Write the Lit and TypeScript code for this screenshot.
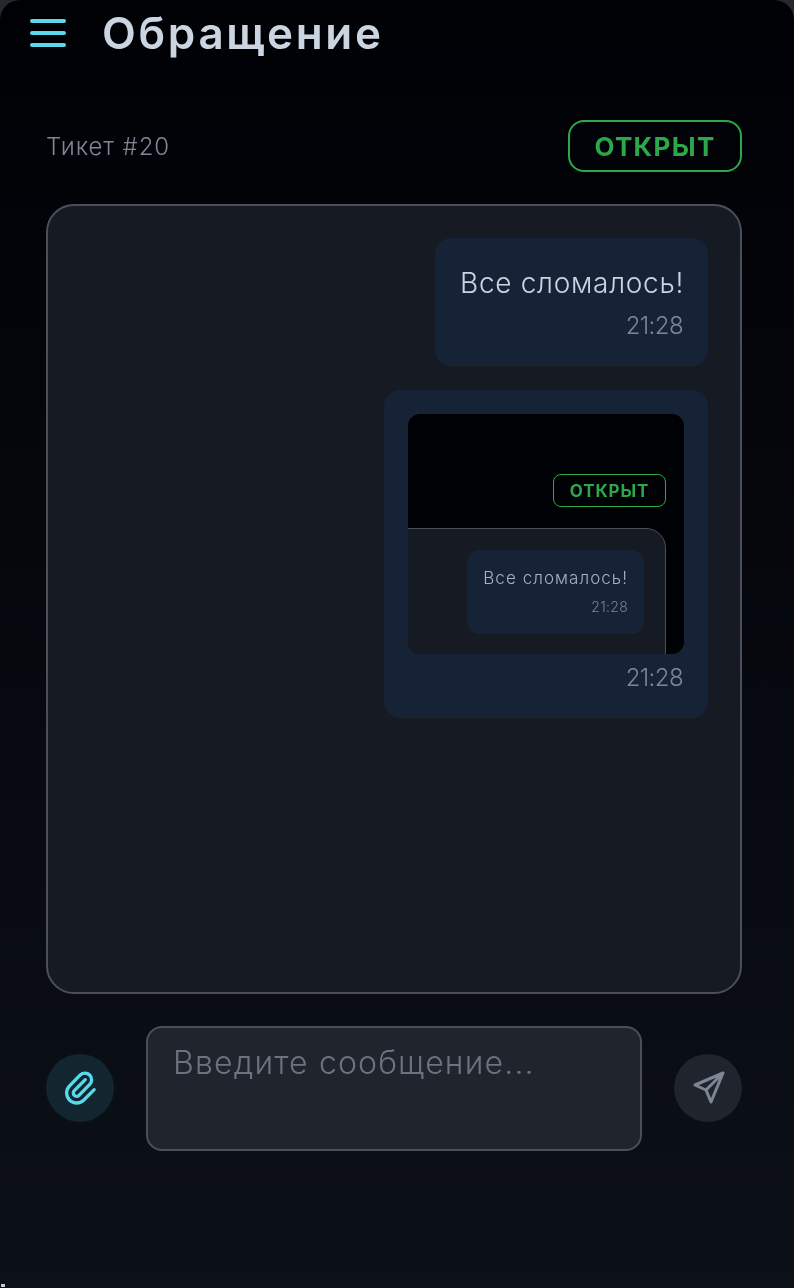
import { LitElement, html, css } from "lit";
import { customElement } from "lit/decorators.js";

@customElement("app-root")
export class AppRoot extends LitElement {
  static styles = css`
    :host { display: block; position: relative; width: 794px; height: 1288px; background: #26282d; font-family: "Inter", "Noto Sans", sans-serif; }
    * { box-sizing: border-box; }
    .page { width: 794px; height: 1288px; border-radius: 20px 20px 0 0; overflow: hidden; padding: 0 52px 0 46px; background: linear-gradient(180deg, #000105 0%, #0c1018 100%); display: flex; flex-direction: column; will-change: transform; }
    .head { display: flex; align-items: center; gap: 36px; height: 66px; margin-left: -16px; }
    .burger { width: 36px; height: 28px; display: flex; flex-direction: column; justify-content: space-between; }
    .burger i { display: block; height: 4px; border-radius: 2px; background: #5ad8ec; }
    h1 { margin: 0; font-size: 44px; font-weight: 600; color: #cbd5e1; letter-spacing: 2.7px; }
    .meta { display: flex; justify-content: space-between; align-items: center; margin-top: 54px; width: 696px; }
    .ticket { font-size: 24px; color: #7f8794; font-weight: 300; letter-spacing: 0.9px; }
    .badge { width: 174px; height: 52px; border: 2px solid #2ba84a; border-radius: 16px; color: #2ba84a; font-weight: 700; font-size: 26px; letter-spacing: 1.3px; display: flex; align-items: center; justify-content: center; }
    .panel { width: 696px; height: 790px; margin-top: 32px; background: #161a22; border: 2px solid #4a4f5a; border-radius: 28px; padding: 32px; display: flex; flex-direction: column; align-items: flex-end; gap: 24px; }
    .bubble { background: #162336; border-radius: 16px; padding: 24px; display: flex; flex-direction: column; align-items: flex-end; }
    .text { font-size: 28px; color: #cbd5e1; font-weight: 300; line-height: 42px; letter-spacing: 0.7px; }
    .time { font-size: 24px; color: #7d8695; font-weight: 300; line-height: 32px; letter-spacing: -0.6px; padding-right: 1px; }
    .b1 { height: 128px; width: 273px; }
    .b1 .time { margin-top: 6px; }
    .b2 { height: 328px; width: 324px; }
    .b2 .time { margin-top: 8px; }
    .shot { width: 276px; height: 240px; border-radius: 12px; overflow: hidden; background: #000105; display: flex; flex-direction: column; align-items: flex-end; padding: 60px 18px 0 0; }
    .sbadge { width: 113px; height: 33px; border: 1px solid #2ba84a; border-radius: 8px; color: #2ba84a; font-weight: 700; font-size: 17px; letter-spacing: 0.9px; display: flex; align-items: center; justify-content: center; flex: none; }
    .spanel { width: 400px; height: 300px; flex: none; margin-top: 21px; background: #161a22; border: 1px solid #4a4f5a; border-radius: 20px; padding: 21px 21px; display: flex; justify-content: flex-end; align-items: flex-start; }
    .sbubble { width: 177px; height: 84px; background: #162336; border-radius: 12px; padding: 12px 16px; display: flex; flex-direction: column; align-items: flex-end; }
    .stext { font-size: 17px; line-height: 33px; color: #aab2bf; font-weight: 300; letter-spacing: 1.05px; }
    .stime { font-size: 14px; line-height: 16px; color: #7b8493; font-weight: 300; margin-top: 4px; letter-spacing: 0.3px; }
    .composer { display: flex; align-items: center; gap: 32px; margin-top: 32px; width: 696px; }
    .round { width: 68px; height: 68px; margin-bottom: 1px; border-radius: 50%; display: flex; align-items: center; justify-content: center; flex: none; }
    .attach { background: #11262f; color: #5ad8ec; }
    .send { background: #20242d; color: #7d8695; }
    .input { flex: 1; height: 125px; background: #20242d; border: 2px solid #4a4f5a; border-radius: 16px; padding: 15px 25px; font-size: 32px; color: #6b7280; font-weight: 300; letter-spacing: 1.15px; }
    .speck { position: absolute; left: 1px; bottom: 1px; width: 4px; height: 3px; background: #c9c9c9; }
    svg { display: block; fill: none; stroke: currentColor; stroke-linecap: round; stroke-linejoin: round; }
  `;

  render() {
    return html`<div class="page">
      <div class="head">
        <div class="burger"><i></i><i></i><i></i></div>
        <h1>Обращение</h1>
      </div>
      <div class="meta">
        <div class="ticket">Тикет #20</div>
        <div class="badge">ОТКРЫТ</div>
      </div>
      <div class="panel">
        <div class="bubble b1">
          <div class="text">Все сломалось!</div>
          <div class="time">21:28</div>
        </div>
        <div class="bubble b2">
          <div class="shot">
            <div class="sbadge">ОТКРЫТ</div>
            <div class="spanel">
              <div class="sbubble">
                <div class="stext">Все сломалось!</div>
                <div class="stime">21:28</div>
              </div>
            </div>
          </div>
          <div class="time">21:28</div>
        </div>
      </div>
      <div class="composer">
        <div class="round attach">
          <svg width="40" height="40" viewBox="0 0 24 24" stroke-width="2"><path d="M15.172 7l-6.586 6.586a2 2 0 102.828 2.828l6.414-6.586a4 4 0 00-5.656-5.656l-6.415 6.585a6 6 0 108.486 8.486L20.5 13"/></svg>
        </div>
        <div class="input">Введите сообщение...</div>
        <div class="round send">
          <svg width="36" height="36" viewBox="0 0 36 36" stroke-width="3"><path d="M33 3 L5 15 L16 20 L21 32 Z M33 3 L16 20"/></svg>
        </div>
      </div>
    </div>
    <div class="speck"></div>`;
  }
}
